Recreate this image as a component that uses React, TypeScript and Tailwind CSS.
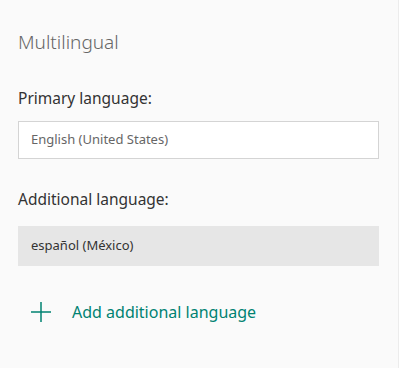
import React from 'react';

const font = { fontFamily: '"Noto Sans", "Open Sans", sans-serif' };

export default function App() {
  return (
    <div
      className="h-[368px] w-[400px] bg-white"
      style={font}
    >
      <div className="h-full w-[399px] border-r border-[#ececec] bg-[#fafafa] px-[18px] pt-[28px]">
        {/* Title */}
        <h2 className="text-[19px] font-light leading-[28px] text-[#666666]">Multilingual</h2>

        {/* Primary */}
        <div className="mt-[31px] text-[15.5px] leading-[22px] text-[#333333]">Primary language:</div>
        <div className="mt-[12px] flex h-[38px] w-[361px] items-center border border-[#d4d4d4] bg-white px-[12px] text-[13px] text-[#666666]">
          English (United States)
        </div>

        {/* Additional */}
        <div className="mt-[29px] text-[15.5px] leading-[22px] text-[#333333]">Additional language:</div>
        <div className="mt-[16px] flex h-[40px] w-[361px] items-center bg-[#e6e6e6] px-[13px] text-[13px] text-[#333333]">
          español (México)
        </div>

        {/* Add button */}
        <button className="mt-[34px] flex items-center gap-[20px] pl-[12px] text-[16px] text-[#008272]">
          <svg width="22" height="22" viewBox="0 0 22 22" fill="none" stroke="#008272" strokeWidth="1.5">
            <path d="M11 1v20M1 11h20" />
          </svg>
          <span>Add additional language</span>
        </button>
      </div>
    </div>
  );
}
